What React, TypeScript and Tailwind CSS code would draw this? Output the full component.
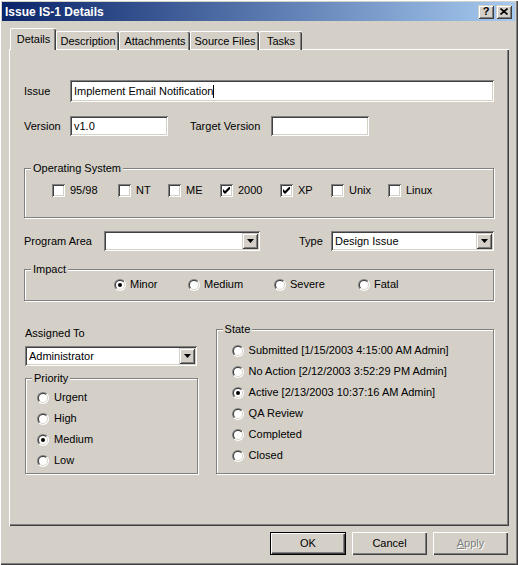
import React from "react";

// Win2000 3D borders
const sunken =
  "bg-white shadow-[inset_1px_1px_0_#808080,inset_-1px_-1px_0_#ffffff,inset_2px_2px_0_#404040,inset_-2px_-2px_0_#d4d0c8]";
const raised =
  "bg-[#d4d0c8] shadow-[inset_1px_1px_0_#ffffff,inset_-1px_-1px_0_#404040,inset_-2px_-2px_0_#808080]";
const raisedSmall =
  "bg-[#d4d0c8] shadow-[inset_1px_1px_0_#d4d0c8,inset_-1px_-1px_0_#404040,inset_2px_2px_0_#ffffff,inset_-2px_-2px_0_#808080]";
const etched = "border border-[#808080] shadow-[inset_1px_1px_0_#ffffff,1px_1px_0_#ffffff]";

function Check({ checked }: { checked?: boolean }) {
  return (
    <span className={`${sunken} w-[13px] h-[13px] shrink-0 flex items-center justify-center`}>
      {checked && (
        <svg width="7" height="7" viewBox="0 0 7 7" className="block">
          <path d="M0 2 L2 4 L6 0 L7 0 L7 2 L2 7 L0 5 Z" fill="#000" />
        </svg>
      )}
    </span>
  );
}

function Radio({ checked }: { checked?: boolean }) {
  return (
    <span className="w-[12px] h-[12px] shrink-0 rounded-full bg-[linear-gradient(135deg,#808080_50%,#ffffff_50%)] flex items-center justify-center">
      <span className="w-[10px] h-[10px] rounded-full bg-[linear-gradient(135deg,#404040_50%,#d4d0c8_50%)] flex items-center justify-center">
        <span className="w-[8px] h-[8px] rounded-full bg-white flex items-center justify-center">
          {checked && <span className="w-[4px] h-[4px] rounded-full bg-black" />}
        </span>
      </span>
    </span>
  );
}

function Combo({ value, className }: { value?: string; className: string }) {
  return (
    <div className={`${sunken} ${className} h-[20px] flex items-center p-[2px]`}>
      <span className="flex-1 pl-[2px] leading-[13px] truncate">{value}</span>
      <span className={`${raisedSmall} w-[16px] h-[16px] flex items-center justify-center`}>
        <svg width="7" height="4" viewBox="0 0 7 4" className="block">
          <polygon points="0,0 7,0 3.5,4" fill="#000" />
        </svg>
      </span>
    </div>
  );
}

function Group({ label, className, children }: { label: string; className: string; children: React.ReactNode }) {
  return (
    <div className={`relative ${etched} ${className}`}>
      <span className="absolute left-[6px] -top-[7px] px-[2px] bg-[#d4d0c8] leading-[13px]">{label}</span>
      {children}
    </div>
  );
}

const tabs = [
  { name: "Details", w: "w-[46px]" },
  { name: "Description", w: "w-[63px]" },
  { name: "Attachments", w: "w-[71px]" },
  { name: "Source Files", w: "w-[69px]" },
  { name: "Tasks", w: "w-[43px]" },
];

const oses = [
  { name: "95/98", w: "w-[66px]" },
  { name: "NT", w: "w-[50px]" },
  { name: "ME", w: "w-[52px]" },
  { name: "2000", w: "w-[60px]", on: true },
  { name: "XP", w: "w-[51px]", on: true },
  { name: "Unix", w: "w-[57px]" },
  { name: "Linux", w: "w-[60px]" },
];

const impacts = [
  { name: "Minor", w: "w-[74px]", on: true },
  { name: "Medium", w: "w-[86px]" },
  { name: "Severe", w: "w-[84px]" },
  { name: "Fatal", w: "w-[60px]" },
];

const priorities = ["Urgent", "High", "Medium", "Low"];

const states = [
  "Submitted [1/15/2003 4:15:00 AM Admin]",
  "No Action [2/12/2003 3:52:29 PM Admin]",
  "Active [2/13/2003 10:37:16 AM Admin]",
  "QA Review",
  "Completed",
  "Closed",
];

export default function App() {
  return (
    <div className="w-[518px] h-[565px] bg-[#d4d0c8] text-black text-[11px] font-['Liberation_Sans',Arial,sans-serif] pt-[2px] pl-[2px] pr-[3px] shadow-[inset_1px_1px_0_#ffffff,inset_-1px_-1px_0_#404040,inset_-2px_-2px_0_#808080] overflow-hidden">
      {/* title bar */}
      <div className="h-[19px] flex items-center bg-[linear-gradient(to_right,#0a246a,#a6caf0)] pl-[3px] pr-[3px]">
        <span className="flex-1 text-white font-bold text-[12px] leading-[14px]">Issue IS-1 Details</span>
        <div className="flex gap-[2px]">
          <span className={`${raisedSmall} w-[16px] h-[14px] flex items-center justify-center font-bold text-[11px] leading-[11px]`}>
            ?
          </span>
          <span className={`${raisedSmall} w-[16px] h-[14px] flex items-center justify-center`}>
            <svg width="8" height="7" viewBox="0 0 8 7" className="block">
              <path d="M0.5 0.5 L7.5 6.5 M7.5 0.5 L0.5 6.5" stroke="#000" strokeWidth="1.6" />
            </svg>
          </span>
        </div>
      </div>

      {/* tabs */}
      <div className="flex items-end ml-[8px] mt-[7px] h-[22px] relative z-10 -mb-[1px]">
        {tabs.map((t, i) =>
          i === 0 ? (
            <div
              key={t.name}
              className={`${t.w} h-[22px] bg-[#d4d0c8] rounded-t-[2px] border-l border-t border-white shadow-[inset_-1px_0_0_#404040,inset_-2px_0_0_#808080] flex justify-center pt-[4px] leading-[13px]`}
            >
              {t.name}
            </div>
          ) : (
            <div
              key={t.name}
              className={`${t.w} h-[19px] rounded-t-[2px] border-l border-t border-white shadow-[inset_-1px_0_0_#404040,inset_-2px_0_0_#808080] flex justify-center pt-[3px] leading-[13px]`}
            >
              {t.name}
            </div>
          ),
        )}
      </div>

      {/* tab panel */}
      <div className="ml-[7px] w-[500px] h-[477px] border-l border-t border-white shadow-[inset_-1px_-1px_0_#404040,inset_-2px_-2px_0_#808080] pl-[14px] pr-[15px] pt-[30px]">
        <div className="flex items-center h-[22px]">
          <span className="w-[46px]">Issue</span>
          <div className={`${sunken} w-[424px] h-[22px] flex items-center pl-[4px]`}>
            <span className="leading-[13px]">Implement Email Notification</span>
            <span className="w-[1px] h-[13px] bg-black" />
          </div>
        </div>

        <div className="flex items-center h-[20px] mt-[14px]">
          <span className="w-[46px]">Version</span>
          <div className={`${sunken} w-[98px] h-[20px] flex items-center pl-[4px]`}>v1.0</div>
          <span className="ml-[22px] w-[81px]">Target Version</span>
          <div className={`${sunken} w-[98px] h-[20px]`} />
        </div>

        <Group label="Operating System" className="mt-[32px] h-[50px]">
          <div className="flex items-center pl-[27px] pt-[15px]">
            {oses.map((o) => (
              <label key={o.name} className={`${o.w} flex items-center gap-[5px] leading-[13px]`}>
                <Check checked={o.on} />
                <span>{o.name}</span>
              </label>
            ))}
          </div>
        </Group>

        <div className="flex items-center h-[20px] mt-[13px]">
          <span className="w-[80px]">Program Area</span>
          <Combo className="w-[156px]" />
          <span className="ml-[39px] w-[32px]">Type</span>
          <Combo className="w-[163px]" value="Design Issue" />
        </div>

        <Group label="Impact" className="mt-[18px] h-[32px]">
          <div className="flex items-center pl-[89px] pt-[8px]">
            {impacts.map((r) => (
              <label key={r.name} className={`${r.w} flex items-center gap-[4px] leading-[13px]`}>
                <Radio checked={r.on} />
                <span>{r.name}</span>
              </label>
            ))}
          </div>
        </Group>

        <div className="flex mt-[26px]">
          <div className="ml-[1px] w-[173px]">
            <div className="leading-[13px]">Assigned To</div>
            <Combo className="w-[172px] mt-[6px]" value="Administrator" />
            <Group label="Priority" className="mt-[12px] h-[96px]">
              <div className="flex flex-col pl-[11px] pt-[8px]">
                {priorities.map((p) => (
                  <label key={p} className="h-[21px] flex items-center gap-[5px]">
                    <Radio checked={p === "Medium"} />
                    <span>{p}</span>
                  </label>
                ))}
              </div>
            </Group>
          </div>
          <Group label="State" className="ml-[18px] mt-[2px] w-[279px] h-[145px]">
            <div className="flex flex-col pl-[15px] pt-[10px]">
              {states.map((s) => (
                <label key={s} className="h-[21px] flex items-center gap-[5px]">
                  <Radio checked={s.startsWith("Active")} />
                  <span>{s}</span>
                </label>
              ))}
            </div>
          </Group>
        </div>
      </div>

      {/* buttons */}
      <div className="flex justify-end gap-[6px] mt-[6px] pr-[7px]">
        <div className="w-[76px] h-[23px] border border-black">
          <div className={`${raised} w-full h-full flex items-center justify-center`}>OK</div>
        </div>
        <div className={`${raised} w-[75px] h-[23px] flex items-center justify-center`}>Cancel</div>
        <div className={`${raised} w-[75px] h-[23px] flex items-center justify-center text-[#808080] [text-shadow:1px_1px_0_#ffffff]`}>
          <span>
            <span className="underline">A</span>pply
          </span>
        </div>
      </div>
    </div>
  );
}
